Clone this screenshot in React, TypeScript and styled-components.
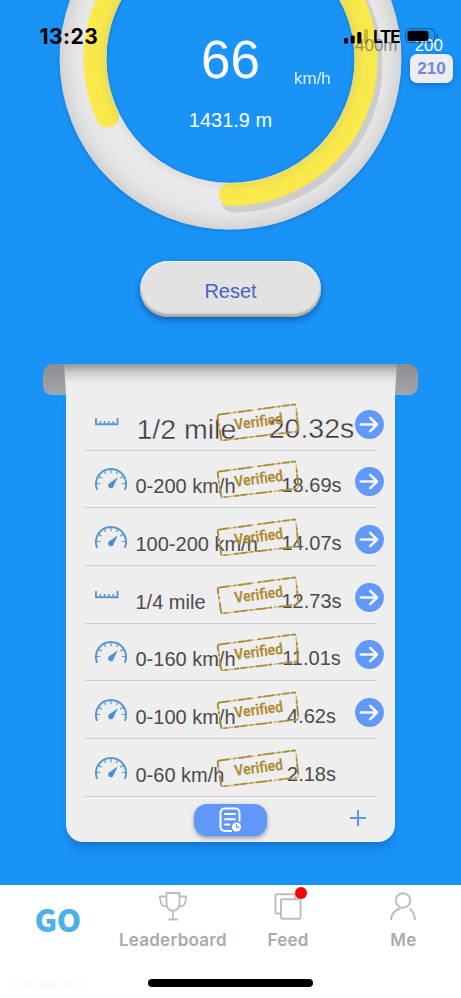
import React from "react";
import styled, { createGlobalStyle } from "styled-components";

const Global = createGlobalStyle`
  * { box-sizing: border-box; }
  html, body { margin: 0; padding: 0; }
  body {
    background: #1a93f7;
    font-family: "Liberation Sans", Arial, sans-serif;
    overflow: hidden;
  }
  svg { display: block; flex: none; }
`;

const Screen = styled.div`
  position: relative;
  display: flex;
  flex-direction: column;
  width: 461px;
  height: 998px;
  overflow: hidden;
  background: #1a93f7;
`;

/* ---------- status bar ---------- */

const StatusBar = styled.header`
  position: absolute;
  z-index: 3;
  inset: 0 0 auto 0;
  height: 54px;
  padding: 24px 22px 0 39.5px;
  display: flex;
  justify-content: space-between;
  align-items: flex-start;
  font-family: Inter, sans-serif;
  color: #000;
`;

const Clock = styled.span`
  font-size: 21px;
  line-height: 25px;
  font-weight: 700;
  letter-spacing: 0.5px;
`;

const Indicators = styled.div`
  display: flex;
  align-items: flex-start;
`;

const Network = styled.span`
  margin: 0 6px 0 4px;
  width: 26px;
  font-size: 17px;
  line-height: 26px;
  font-weight: 700;
  letter-spacing: -1.1px;
  white-space: nowrap;
`;

/* ---------- gauge ---------- */

const Gauge = styled.section`
  position: relative;
  height: 261px;
  flex: none;
  color: #fff;
`;

const Dial = styled.svg`
  position: absolute;
  left: 0;
  top: 0;
`;

const Readout = styled.div`
  position: relative;
  padding-top: 30px;
  display: flex;
  flex-direction: column;
  align-items: center;
`;

const SpeedLine = styled.div`
  display: grid;
  grid-template-columns: 1fr auto 1fr;
  align-self: stretch;
  height: 78px;
`;

const Speed = styled.span`
  grid-column: 2;
  font-size: 53px;
  line-height: 60px;
`;

const Unit = styled.span`
  padding: 39px 0 0 34px;
  font-size: 17px;
  line-height: 20px;
  opacity: 0.85;
`;

const Distance = styled.span`
  font-size: 20px;
  line-height: 24px;
`;

const Scale = styled.div`
  position: absolute;
  z-index: 2;
  top: 36px;
  right: 7px;
  width: 99px;
  display: flex;
  flex-wrap: wrap;
  justify-content: space-between;
  font-size: 17px;
  line-height: 20px;
`;

const ScaleMark = styled.span<{ $muted?: boolean }>`
  color: ${(p) => (p.$muted ? "rgba(105,105,105,0.72)" : "#fff")};
  margin-right: ${(p) => (p.$muted ? 0 : 11)}px;
`;

const ScaleBadge = styled.span`
  margin: -2px 1px 0 auto;
  width: 43px;
  height: 29px;
  border-radius: 7px;
  background: #ececf1;
  box-shadow: 0 2px 6px rgba(0, 40, 110, 0.35);
  color: #7189dc;
  font-weight: 700;
  line-height: 29px;
  text-align: center;
`;

/* ---------- reset ---------- */

const ResetButton = styled.button`
  flex: none;
  align-self: center;
  width: 181px;
  height: 56px;
  padding: 4px 0 0;
  border: 0;
  border-radius: 28px;
  background: #e2e2e2;
  box-shadow: inset 0 -3px 2px #a9a9a9, inset 0 1px 1px #f0f0f0,
    0 3px 6px rgba(0, 30, 80, 0.45);
  color: #4562c9;
  font: 20px "Liberation Sans", Arial, sans-serif;
`;

/* ---------- printed results ---------- */

const Printer = styled.section`
  position: relative;
  flex: none;
  height: 521px;
  margin: 47px 43px 0;
  display: flex;
  flex-direction: column;
  align-items: center;
`;

const Slot = styled.div`
  position: absolute;
  inset: 0 0 auto 0;
  height: 31px;
  border-radius: 10px 10px 9px 9px;
  background: linear-gradient(#8d8c91, #a2a2a7 90%, #8db0cf);
`;

const PaperEdge = styled.div`
  position: relative;
  flex: none;
  width: 333px;
  height: 29px;
  background: linear-gradient(#969696, #c9c9ca 28%, #e7e7e8 58%, #eee 80%);
  clip-path: polygon(0 0, 100% 0, 331px 100%, 2px 100%);
`;

const Paper = styled.div`
  position: relative;
  flex: none;
  width: 329px;
  height: 449px;
  border-radius: 0 0 17px 17px;
  background: #eee;
  box-shadow: 0 6px 7px -3px rgba(0, 50, 110, 0.3),
    0 14px 8px rgba(0, 50, 110, 0.05);
  display: flex;
  flex-direction: column;
`;

const Row = styled.div`
  position: relative;
  height: 57.7px;
  margin: 0 18px;
  flex: none;
  border-bottom: 1px solid #cfcfd0;
`;

const RowBody = styled.div`
  width: 299.5px;
  height: 57px;
  padding-left: 11px;
  display: flex;
  align-items: flex-start;
`;

const IconCell = styled.span<{ $top: number }>`
  width: 39.5px;
  flex: none;
  padding-top: ${(p) => p.$top}px;
`;

const Label = styled.span<{ $large?: boolean }>`
  flex: 1;
  min-width: 0;
  white-space: nowrap;
  color: ${(p) => (p.$large ? "#38383b" : "#4b4b4e")};
  -webkit-text-stroke: ${(p) => (p.$large ? "0.4px #eee" : "0")};
  font-size: ${(p) => (p.$large ? 28.5 : 20)}px;
  line-height: 30px;
  padding: ${(p) => (p.$large ? "21px 0 0 2px" : "20.500px 0 0 1px")};
`;

const Time = styled.span<{ $large?: boolean }>`
  width: 86px;
  flex: none;
  text-align: center;
  white-space: nowrap;
  color: ${(p) => (p.$large ? "#38383b" : "#4b4b4e")};
  -webkit-text-stroke: ${(p) => (p.$large ? "0.4px #eee" : "0")};
  font-size: ${(p) => (p.$large ? 28.5 : 20)}px;
  line-height: 30px;
  padding-top: ${(p) => (p.$large ? 20 : 19.5)}px;
`;

const ArrowCell = styled.span`
  width: 29px;
  flex: none;
  padding-top: 16.5px;
`;

const Stamp = styled.svg`
  position: absolute;
  left: 131.5px;
  top: 9.5px;
`;

const PaperFooter = styled.div`
  display: grid;
  grid-template-columns: 1fr auto 1fr;
  align-items: center;
  height: 42px;
  margin: 2px 18px 0;
`;

const HistoryButton = styled.button`
  grid-column: 2;
  display: grid;
  place-items: center;
  width: 73px;
  height: 32px;
  padding: 0;
  border: 0;
  border-radius: 13px;
  background: #6197f6;
  box-shadow: 0 2px 4px rgba(80, 95, 140, 0.6);
`;

const AddButton = styled.button`
  justify-self: end;
  margin: 0 10px 3px 0;
  padding: 0;
  border: 0;
  background: none;
`;

/* ---------- tab bar ---------- */

const TabBar = styled.nav`
  position: relative;
  flex: none;
  height: 113px;
  background: #fff;
  display: grid;
  grid-template-columns: repeat(4, 1fr);
`;

const Tab = styled.div`
  display: flex;
  flex-direction: column;
  align-items: center;
  padding-top: 6px;
  color: #aaaaac;
`;

const TabIcon = styled.span`
  position: relative;
  display: block;
  height: 38px;
`;

const TabLabel = styled.span`
  font: 600 17px/22px Inter, sans-serif;
  letter-spacing: 0.25px;
`;

const GoLabel = styled.span`
  padding-top: 4px;
  font: 900 31px/48px "Noto Sans CJK SC", "Open Sans", sans-serif;
  letter-spacing: -0.3px;
  color: #4bb1e6;
`;

const Dot = styled.i`
  position: absolute;
  right: -5px;
  top: -4px;
  width: 12px;
  height: 12px;
  border-radius: 50%;
  background: #fb0007;
`;

const HomeIndicator = styled.div`
  position: absolute;
  left: 148px;
  bottom: 11px;
  width: 165px;
  height: 8px;
  border-radius: 4px;
  background: #000;
`;

const Watermark = styled.span`
  position: absolute;
  left: 10px;
  bottom: 5px;
  font: 700 15px/18px "Liberation Sans", sans-serif;
  letter-spacing: -0.7px;
  color: #fff;
  text-shadow: 0 0 1px #ddd;
`;

const SpeedoIcon = () => (
  <svg width="32" height="24" viewBox="0 0 32 24" fill="none" stroke="#5a98d0">
    <path d="M2.2 22.8 A15 15 0 1 1 29.8 22.8" strokeWidth="2" />
    <path
      d="M16 2v4.200M9 4l1.700 3M23 4l-1.700 3M3.900 9.500l2.900 1.600M28.100 9.500l-2.900 1.600M1.500 16.500h3.800M30.500 16.500h-3.800"
      strokeWidth="1.2"
    />
    <path d="M22.7 10.5 L18.9 18.6 A2.9 2.9 0 1 1 14.6 15.9 Z" fill="#4a90d2" stroke="none" />
  </svg>
);

const RulerIcon = () => (
  <svg width="24" height="8" viewBox="0 0 24 8" fill="none" stroke="#5a98d0">
    <path d="M1 0v6.2h21.5V0" strokeWidth="1.9" />
    <path d="M5.3 3v3M9.6 3v3M13.9 3v3M18.2 3v3" strokeWidth="1.5" />
  </svg>
);

const ArrowIcon = () => (
  <svg width="29" height="29" viewBox="0 0 29 29">
    <circle cx="14.5" cy="14.5" r="14.4" fill="#6298f7" />
    <path
      d="M5.8 14.5H22M15.2 7.9l6.9 6.6-6.9 6.6"
      fill="none"
      stroke="#f4f7fb"
      strokeWidth="2.5"
      strokeLinecap="round"
      strokeLinejoin="round"
    />
  </svg>
);

const stampOutline =
  "M3 11.6 Q1.4 12 1.8 14 L5 35.5 Q5.4 37.6 7.4 37.3 L80.8 28.5 Q82.7 28.2 82.3 26 L80 4 Q79.7 1.2 77.8 1.5 Z";

const VerifiedStamp = () => (
  <Stamp width="86" height="40" viewBox="0 0 86 40" fill="none">
    <path d={stampOutline} stroke="#c2ad74" strokeWidth="1.2" strokeDasharray="13 1 6 1.5 17 2 4 1 9 2.5" />
    <path d={stampOutline} stroke="#ad8b32" strokeWidth="1.8" strokeDasharray="7 3 2 4 11 2 3 7 5 1" />
    <text
      x="19"
      y="27"
      transform="rotate(-7.5 19 27)"
      fontFamily="Roboto, sans-serif"
      fontWeight="700"
      fontSize="15.5"
      textLength="49"
      lengthAdjust="spacingAndGlyphs"
      fill="#b08b35"
    >
      Verified
    </text>
  </Stamp>
);

type Run = { kind: "ruler" | "speed"; label: string; time: string; large?: boolean; link?: boolean };

const runs: Run[] = [
  { kind: "ruler", label: "1/2 mile", time: "20.32s", large: true, link: true },
  { kind: "speed", label: "0-200 km/h", time: "18.69s", link: true },
  { kind: "speed", label: "100-200 km/h", time: "14.07s", link: true },
  { kind: "ruler", label: "1/4 mile", time: "12.73s", link: true },
  { kind: "speed", label: "0-160 km/h", time: "11.01s", link: true },
  { kind: "speed", label: "0-100 km/h", time: "4.62s", link: true },
  { kind: "speed", label: "0-60 km/h", time: "2.18s" },
];

const ResultRow = ({ run }: { run: Run }) => (
  <Row>
    <RowBody>
      <IconCell $top={run.kind === "ruler" ? 25 : 16.5}>
        {run.kind === "ruler" ? <RulerIcon /> : <SpeedoIcon />}
      </IconCell>
      <Label $large={run.large}>{run.label}</Label>
      <Time $large={run.large}>{run.time}</Time>
      <ArrowCell>{run.link && <ArrowIcon />}</ArrowCell>
    </RowBody>
    <VerifiedStamp />
  </Row>
);

const DialArt = () => (
  <Dial width="461" height="261" viewBox="0 0 461 261" fill="none">
    <defs>
      <radialGradient id="ring" gradientUnits="userSpaceOnUse" cx="230.5" cy="58.5" r="171">
        <stop offset="0.725" stopColor="#dedede" />
        <stop offset="0.78" stopColor="#eaeaea" />
        <stop offset="0.9" stopColor="#e6e6e6" />
        <stop offset="0.97" stopColor="#dadadb" />
        <stop offset="1" stopColor="#d2d2d5" />
      </radialGradient>
      <radialGradient id="band" gradientUnits="userSpaceOnUse" cx="230.5" cy="58.5" r="148">
        <stop offset="0.84" stopColor="#e9dc55" />
        <stop offset="0.9" stopColor="#f8e84c" />
        <stop offset="1" stopColor="#faea49" />
      </radialGradient>
      <filter id="soft" x="-10%" y="-10%" width="120%" height="120%">
        <feGaussianBlur stdDeviation="2" />
      </filter>
      <filter id="faint" x="-10%" y="-10%" width="120%" height="120%">
        <feGaussianBlur stdDeviation="0.6" />
      </filter>
      <clipPath id="ringClip">
        <path
          clipRule="evenodd"
          d="M59.5 58.5a171 171 0 1 0 342 0a171 171 0 1 0 -342 0ZM106.5 59.5a124 124 0 1 0 248 0a124 124 0 1 0 -248 0Z"
        />
      </clipPath>
    </defs>
    <circle cx="230.5" cy="59.5" r="147.5" stroke="#0b4d93" strokeOpacity="0.4" strokeWidth="47" filter="url(#soft)" />
    <circle cx="230.5" cy="58.7" r="147.5" stroke="url(#ring)" strokeWidth="47" />
    <g clipPath="url(#ringClip)" strokeLinecap="round">
      <path
        d="M230.5 -76.5 A135.5 135.5 0 0 1 230.5 194.5"
        transform="translate(3.5 5)"
        stroke="#cdcdce"
        strokeWidth="26"
        filter="url(#faint)"
      />
      <path d="M107.5 116 A135.5 135.5 0 1 1 230.5 194.5" stroke="url(#band)" strokeWidth="23" />
    </g>
  </Dial>
);

export default function App() {
  return (
    <Screen>
      <Global />
      <StatusBar>
        <Clock>13:23</Clock>
        <Indicators>
          <svg width="25" height="20" viewBox="0 0 25 20">
            <rect x="0" y="14" width="4" height="5.5" rx="1.2" />
            <rect x="6.7" y="11.5" width="4" height="8" rx="1.2" />
            <rect x="13.3" y="8" width="4" height="11.5" rx="1.2" />
            <rect x="20" y="5" width="4" height="14.5" rx="1.2" opacity="0.2" />
          </svg>
          <Network>LTE</Network>
          <svg width="34" height="20" viewBox="0 0 34 20">
            <rect x="0.7" y="4.7" width="29" height="14" rx="4" fill="none" stroke="#000" strokeOpacity="0.4" />
            <rect x="2.5" y="6.7" width="21" height="10.3" rx="2.5" />
            <path d="M31.5 9.5v4.6q1.6-.7 1.6-2.3t-1.6-2.3Z" opacity="0.45" />
          </svg>
        </Indicators>
      </StatusBar>

      <Gauge>
        <DialArt />
        <Readout>
          <SpeedLine>
            <Speed>66</Speed>
            <Unit>km/h</Unit>
          </SpeedLine>
          <Distance>1431.9 m</Distance>
        </Readout>
        <Scale>
          <ScaleMark $muted>400m</ScaleMark>
          <ScaleMark>200</ScaleMark>
          <ScaleBadge>210</ScaleBadge>
        </Scale>
      </Gauge>

      <ResetButton>Reset</ResetButton>

      <Printer>
        <Slot />
        <PaperEdge />
        <Paper>
          {runs.map((run) => (
            <ResultRow key={run.label} run={run} />
          ))}
          <PaperFooter>
            <HistoryButton aria-label="History">
              <svg width="23" height="26" viewBox="0 0 23 26" fill="none" stroke="#fff" strokeWidth="2" strokeLinecap="round">
                <path d="M12 24H5.5a4 4 0 0 1-4-4V5.5a4 4 0 0 1 4-4h11a4 4 0 0 1 4 4V14" />
                <path d="M6 7h10M6 12.3h10M6 17.6h4.5" />
                <circle cx="17.5" cy="20" r="4.6" fill="#fff" stroke="none" />
                <path d="M17.5 17.5v2.7h2.2" stroke="#6197f6" strokeWidth="1.2" />
              </svg>
            </HistoryButton>
            <AddButton aria-label="Add">
              <svg width="18" height="18" viewBox="0 0 18 18" stroke="#5c93ee" strokeWidth="2">
                <path d="M9 1v16M1 9h16" />
              </svg>
            </AddButton>
          </PaperFooter>
        </Paper>
      </Printer>

      <TabBar>
        <Tab>
          <GoLabel>GO</GoLabel>
        </Tab>
        <Tab>
          <TabIcon>
            <svg width="28" height="31" viewBox="0 0 28 31" fill="none" stroke="#bdbdbf" strokeWidth="1.8">
              <path d="M7.500 2h13v10.500q0 6.500-6.500 7.500q-6.500-1-6.500-7.500ZM14 20v8.300M9.300 28.500h9.600M7.500 5.500H.9q.5 7.500 3 9.300h4M20.500 5.500h6.600q-.5 7.500-3 9.300h-4" />
            </svg>
          </TabIcon>
          <TabLabel>Leaderboard</TabLabel>
        </Tab>
        <Tab>
          <TabIcon>
            <svg width="28" height="31" viewBox="0 0 28 31" fill="none" stroke="#bdbdbf" strokeWidth="1.9">
              <rect x="7" y="8.3" width="19.5" height="19.5" rx="1" />
              <path d="M7 22.5H2.5a1 1 0 0 1-1-1V4.2a1 1 0 0 1 1-1h17.8a1 1 0 0 1 1 1v4" />
            </svg>
            <Dot />
          </TabIcon>
          <TabLabel>Feed</TabLabel>
        </Tab>
        <Tab>
          <TabIcon>
            <svg width="28" height="31" viewBox="0 0 28 31" fill="none" stroke="#bdbdbf" strokeWidth="2">
              <circle cx="14" cy="9.5" r="7.3" />
              <path d="M11.5 17.2Q2.5 20 2 29M20.5 17.8Q25.7 21.5 26 29" />
            </svg>
          </TabIcon>
          <TabLabel>Me</TabLabel>
        </Tab>
        <HomeIndicator />
        <Watermark>OTOMOTO</Watermark>
      </TabBar>
    </Screen>
  );
}
